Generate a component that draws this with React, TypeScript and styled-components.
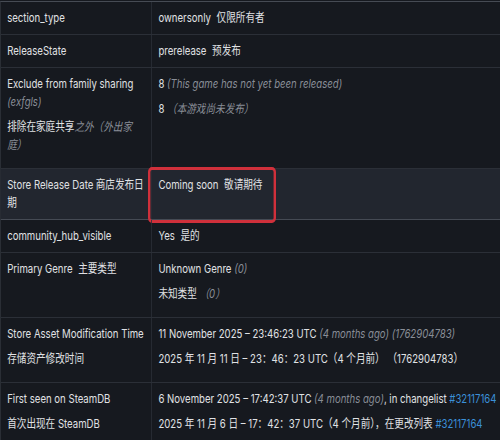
import React from 'react';
import styled, { createGlobalStyle } from 'styled-components';

const Global = createGlobalStyle`
  html, body { margin: 0; padding: 0; background: #16191f; overflow: hidden; }
`;

const Viewport = styled.div`
  width: 500px;
  height: 440px;
  overflow: hidden;
  background: #16191f;
`;

const Table = styled.div`
  width: 660px;
  margin-top: 1px;
  transform: scaleX(0.8);
  transform-origin: 0 0;
  border-top: 1px solid #464b54;
  border-left: 1px solid #30343c;
  font-family: Inter, "Noto Sans CJK SC", sans-serif;
  font-size: 12px;
  line-height: 18px;
  color: #e0e2e5;
`;

const Row = styled.div<{ $hl?: boolean }>`
  display: grid;
  grid-template-columns: 189px 1fr;
  border-bottom: 1px solid ${(p) => (p.$hl ? '#454a54' : '#2b2f37')};
  background: ${(p) => (p.$hl ? '#22262f' : 'transparent')};
`;

const Cell = styled.div`
  position: relative;
  padding: 7px 8px;
`;

const Key = styled(Cell)`
  border-right: 1px solid #2b2f37;
`;

const Value = styled(Cell)``;

const P = styled.div`
  margin-bottom: 7px;
`;

const Muted = styled.i`
  color: #898e97;
`;

const Zh = styled.span<{ $tight?: boolean }>`
  margin-left: ${(p) => (p.$tight ? '3px' : '7px')};
`;

const Link = styled.a`
  color: #3b90d8;
  text-decoration: none;
`;

const Marker = styled.div`
  position: absolute;
  left: -5px;
  top: -2px;
  width: 160px;
  height: 56px;
  box-sizing: border-box;
  border: 3px solid #d0303b;
  border-radius: 5px;
  pointer-events: none;
`;

export default function App() {
  return (
    <>
      <Global />
      <Viewport>
        <Table>
          <Row>
            <Key>section_type</Key>
            <Value>
              ownersonly<Zh>仅限所有者</Zh>
            </Value>
          </Row>
          <Row>
            <Key>ReleaseState</Key>
            <Value>
              prerelease<Zh>预发布</Zh>
            </Value>
          </Row>
          <Row>
            <Key>
              <P>
                Exclude from family sharing <Muted>(exfgls)</Muted>
              </P>
              <P>
                排除在家庭共享<Muted>之外（外出家庭）</Muted>
              </P>
            </Key>
            <Value>
              <P>
                8 <Muted>(This game has not yet been released)</Muted>
              </P>
              <P>
                8 <Muted>（本游戏尚未发布）</Muted>
              </P>
            </Value>
          </Row>
          <Row $hl>
            <Key>
              Store Release Date<Zh $tight>商店发布日期</Zh>
            </Key>
            <Value>
              Coming soon<Zh>敬请期待</Zh>
              <Marker />
            </Value>
          </Row>
          <Row>
            <Key>community_hub_visible</Key>
            <Value>
              Yes<Zh>是的</Zh>
            </Value>
          </Row>
          <Row>
            <Key>
              Primary Genre<Zh>主要类型</Zh>
            </Key>
            <Value>
              <P>
                Unknown Genre <Muted>(0)</Muted>
              </P>
              <P>
                未知类型 <Muted>（0）</Muted>
              </P>
            </Value>
          </Row>
          <Row>
            <Key>
              <P>Store Asset Modification Time</P>
              <P>存储资产修改时间</P>
            </Key>
            <Value>
              <P>
                11 November 2025 – 23:46:23 UTC <Muted>(4 months ago) (1762904783)</Muted>
              </P>
              <P>2025 年 11 月 11 日 – 23：46：23 UTC（4 个月前） （1762904783）</P>
            </Value>
          </Row>
          <Row>
            <Key>
              <P>First seen on SteamDB</P>
              <P>首次出现在 SteamDB</P>
            </Key>
            <Value>
              <P>
                6 November 2025 – 17:42:37 UTC <Muted>(4 months ago)</Muted>, in changelist{' '}
                <Link href="#">#32117164</Link>
              </P>
              <P>
                2025 年 11 月 6 日 – 17：42：37 UTC（4 个月前），在更改列表 <Link href="#">#32117164</Link>
              </P>
            </Value>
          </Row>
        </Table>
      </Viewport>
    </>
  );
}
